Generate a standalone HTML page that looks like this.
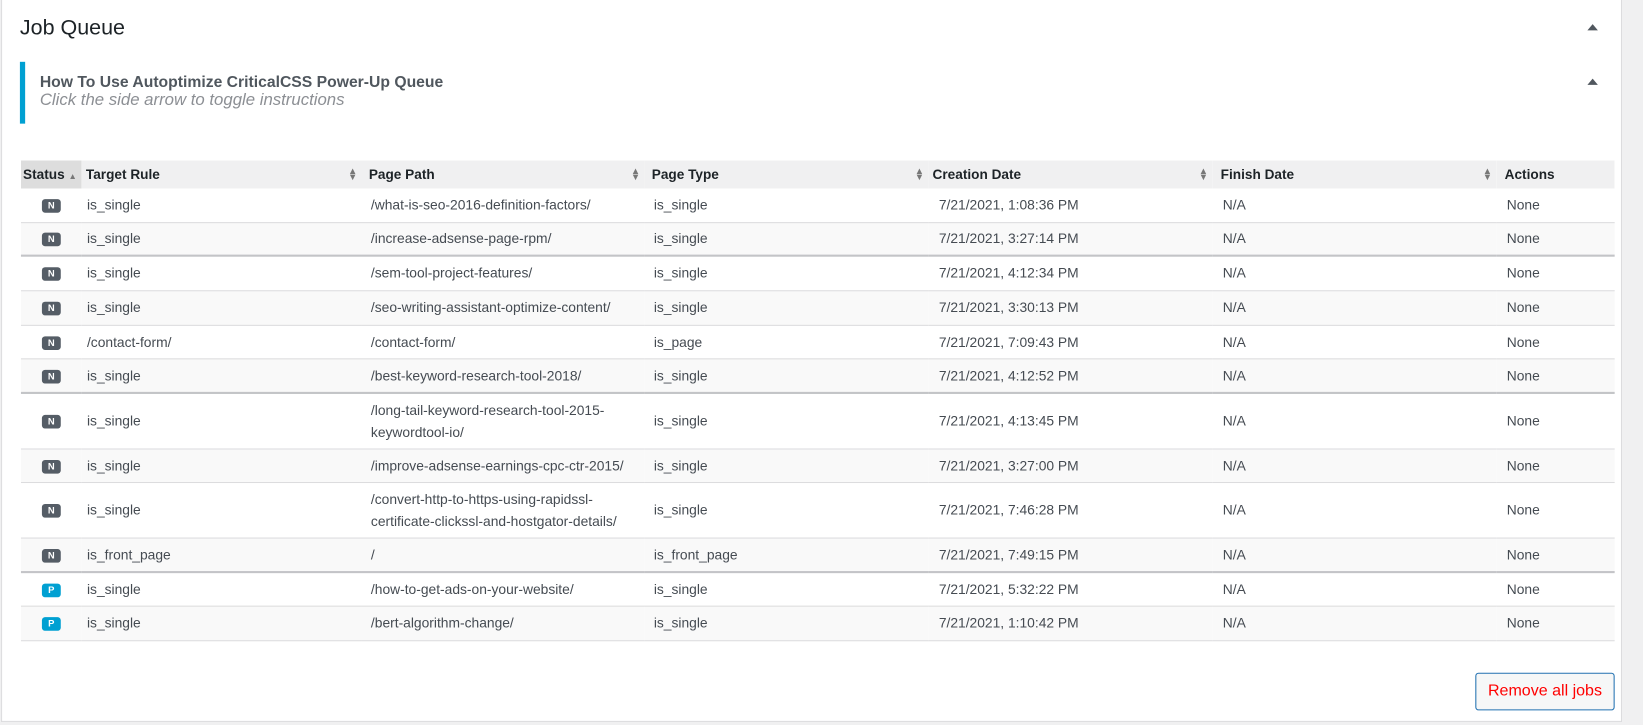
<!DOCTYPE html>
<html><head><meta charset="utf-8"><style>
body{margin:0;width:1643px;height:725px;background:#f0f0f1;font-family:"Liberation Sans",sans-serif;color:#3c434a;overflow:hidden;position:relative}
#w{position:absolute;left:0;top:0;width:1568px;height:692px;transform:scale(1.0478);transform-origin:0 0}
.panel{position:absolute;left:1px;top:0;width:1547px;height:689px;background:#fff;border:1px solid #dcdcde;border-top:none;box-sizing:border-box}
h2{position:absolute;left:19px;top:15px;margin:0;font-size:20.5px;font-weight:normal;color:#1d2327}
.tri{position:absolute;width:0;height:0;border-left:5px solid transparent;border-right:5px solid transparent;border-bottom:6px solid #50575e}
.note{position:absolute;left:19px;top:59px;height:59px;border-left:5px solid #00a0d2;padding-left:14px;box-sizing:border-box;width:1400px}
.note b{display:block;margin-top:11px;font-size:15px;color:#50575e}
.note i{display:block;font-size:16px;color:#8c8f94;font-weight:300}
table{position:absolute;left:20px;top:153px;width:1521px;border-collapse:collapse;font-size:13.2px}
th{background:#f0f0f1;height:27px;text-align:left;font-weight:bold;color:#1d2327;padding:0 0 0 4px;position:relative;font-size:13px}
td{padding:0 0 0 5px;border-bottom:1px solid #dcdcde;color:#454b52;line-height:21px}
tr.g td{background:#f9f9f9}
tr.t td{border-bottom:2px solid #c3c4c7}
.s{position:absolute;right:4px;top:7px;font-size:9px;line-height:6px;color:#777}
.b{display:inline-block;width:18px;height:13px;border-radius:3px;background:#555d66;color:#fff;font-size:9px;font-weight:bold;text-align:center;line-height:13px;margin-left:15px;vertical-align:middle}
.b.p{background:#00a0d2}
.btn{position:absolute;left:1408px;top:642px;width:133px;height:36px;border:1px solid #2271b1;border-radius:3px;background:#f6f7f7;color:#ff0000;font-size:15.3px;text-align:center;line-height:34px;box-sizing:border-box}
td.c{padding-left:10px}
td:nth-child(3),td:nth-child(4){padding-left:9px}
th:nth-child(3),th:nth-child(4){padding-left:7px}
th:nth-child(6){padding-left:8px}
</style></head><body><div id="w">
<div class="panel"></div>
<h2>Job Queue</h2>
<div class="tri" style="left:1515px;top:23px"></div>
<div class="note"><b>How To Use Autoptimize CriticalCSS Power-Up Queue</b><i>Click the side arrow to toggle instructions</i></div>
<div class="tri" style="left:1515px;top:75px"></div>
<table>
<colgroup><col style="width:58px"><col style="width:267px"><col style="width:270px"><col style="width:271px"><col style="width:271px"><col style="width:271px"><col style="width:113px"></colgroup>
<tr><th style="background:#ddd;padding-left:2px">Status <span style="font-size:8px;color:#777">▲</span></th><th>Target Rule<span class="s">▲<br>▼</span></th><th>Page Path<span class="s">▲<br>▼</span></th><th>Page Type<span class="s">▲<br>▼</span></th><th>Creation Date<span class="s">▲<br>▼</span></th><th>Finish Date<span class="s">▲<br>▼</span></th><th style="padding-left:8px">Actions</th></tr>
<tr style="height:32px"><td><span class="b">N</span></td><td>is_single</td><td>/what-is-seo-2016-definition-factors/</td><td>is_single</td><td class="c">7/21/2021, 1:08:36 PM</td><td class="c">N/A</td><td class="c">None</td></tr>
<tr class="g t" style="height:32px"><td><span class="b">N</span></td><td>is_single</td><td>/increase-adsense-page-rpm/</td><td>is_single</td><td class="c">7/21/2021, 3:27:14 PM</td><td class="c">N/A</td><td class="c">None</td></tr>
<tr style="height:33px"><td><span class="b">N</span></td><td>is_single</td><td>/sem-tool-project-features/</td><td>is_single</td><td class="c">7/21/2021, 4:12:34 PM</td><td class="c">N/A</td><td class="c">None</td></tr>
<tr class="g" style="height:33px"><td><span class="b">N</span></td><td>is_single</td><td>/seo-writing-assistant-optimize-content/</td><td>is_single</td><td class="c">7/21/2021, 3:30:13 PM</td><td class="c">N/A</td><td class="c">None</td></tr>
<tr style="height:32px"><td><span class="b">N</span></td><td>/contact-form/</td><td>/contact-form/</td><td>is_page</td><td class="c">7/21/2021, 7:09:43 PM</td><td class="c">N/A</td><td class="c">None</td></tr>
<tr class="g t" style="height:33px"><td><span class="b">N</span></td><td>is_single</td><td>/best-keyword-research-tool-2018/</td><td>is_single</td><td class="c">7/21/2021, 4:12:52 PM</td><td class="c">N/A</td><td class="c">None</td></tr>
<tr style="height:53px"><td><span class="b">N</span></td><td>is_single</td><td>/long-tail-keyword-research-tool-2015-<br>keywordtool-io/</td><td>is_single</td><td class="c">7/21/2021, 4:13:45 PM</td><td class="c">N/A</td><td class="c">None</td></tr>
<tr class="g" style="height:32px"><td><span class="b">N</span></td><td>is_single</td><td>/improve-adsense-earnings-cpc-ctr-2015/</td><td>is_single</td><td class="c">7/21/2021, 3:27:00 PM</td><td class="c">N/A</td><td class="c">None</td></tr>
<tr style="height:53px"><td><span class="b">N</span></td><td>is_single</td><td>/convert-http-to-https-using-rapidssl-<br>certificate-clickssl-and-hostgator-details/</td><td>is_single</td><td class="c">7/21/2021, 7:46:28 PM</td><td class="c">N/A</td><td class="c">None</td></tr>
<tr class="g t" style="height:33px"><td><span class="b">N</span></td><td>is_front_page</td><td>/</td><td>is_front_page</td><td class="c">7/21/2021, 7:49:15 PM</td><td class="c">N/A</td><td class="c">None</td></tr>
<tr style="height:32px"><td><span class="b p">P</span></td><td>is_single</td><td>/how-to-get-ads-on-your-website/</td><td>is_single</td><td class="c">7/21/2021, 5:32:22 PM</td><td class="c">N/A</td><td class="c">None</td></tr>
<tr class="g" style="height:33px"><td><span class="b p">P</span></td><td>is_single</td><td>/bert-algorithm-change/</td><td>is_single</td><td class="c">7/21/2021, 1:10:42 PM</td><td class="c">N/A</td><td class="c">None</td></tr>
</table>
<div class="btn">Remove all jobs</div>
</div></body></html>
